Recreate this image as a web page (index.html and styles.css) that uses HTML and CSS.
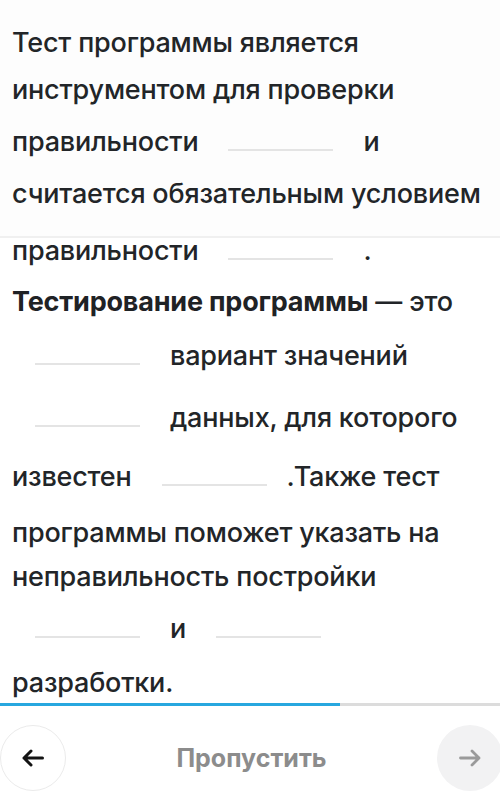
FILE: index.html
```html
<!DOCTYPE html>
<html lang="ru">

<head>
  <meta charset="UTF-8">
  <title>Тест программы</title>
  <link rel="stylesheet" href="styles.css">
</head>

<body>
  <div class="task">
    <div class="task-top">
      <div class="line first">Тест программы является</div>
      <div class="line h47">инструментом для проверки</div>
      <div class="line h52">правильности<span class="blank"></span>и</div>
      <div class="line h52">считается обязательным условием</div>
    </div>
    <div class="line seam">правильности<span class="blank"></span>.</div>
    <div class="line h52"><b>Тестирование программы</b> — это</div>
    <div class="line h54"><span class="blank lead"></span>вариант значений</div>
    <div class="line h62"><span class="blank lead"></span>данных, для которого</div>
    <div class="line h59">известен<span class="blank dot"></span>.Также тест</div>
    <div class="line h56">программы поможет указать на</div>
    <div class="line h44">неправильность постройки</div>
    <div class="line h52"><span class="blank lead"></span>и<span class="blank"></span></div>
    <div class="line h54">разработки.</div>
  </div>

  <!-- прогресс -->
  <div class="progress">
    <div class="progress-fill"></div>
  </div>

  <div class="footer">
    <a class="round-btn back" href="javascript:;">
      <svg width="24" height="18" viewBox="0 0 24 18">
        <path d="M21.5 9H3M10 2L3 9L10 16" fill="none" stroke="#141414" stroke-width="3" stroke-linecap="round" stroke-linejoin="round" />
      </svg>
    </a>
    <a class="skip" href="javascript:;">Пропустить</a>
    <a class="round-btn next" href="javascript:;">
      <svg width="24" height="18" viewBox="0 0 24 18">
        <path d="M2.5 9H21M14 2L21 9L14 16" fill="none" stroke="#9a9a9a" stroke-width="2.8" stroke-linecap="round" stroke-linejoin="round" />
      </svg>
    </a>
  </div>
</body>

</html>
```

FILE: styles.css
```css
* {
  padding: 0;
  margin: 0;
  box-sizing: border-box;
}

body {
  width: 500px;
  height: 801px;
  overflow: hidden;
  background: #ffffff;
  font-family: Inter, "Noto Sans", sans-serif;
  color: #222528;
}

.task-top {
  background: #fdfdfd;
  padding-bottom: 28px;
  border-bottom: 2px solid #f0f0f0;
}

.line {
  padding-left: 12px;
  font-size: 27px;
  font-weight: 500;
  letter-spacing: -0.2px;
  line-height: 28px;
  white-space: nowrap;
}

.line b {
  font-weight: 700;
  color: #1f2225;
}

/* высота строк подобрана по скриншоту */
.first {
  padding-top: 29px;
}

.h44 {
  padding-top: 16px;
}

.h47 {
  padding-top: 19px;
}

.h52 {
  padding-top: 24px;
}

.h54 {
  padding-top: 26px;
}

.h56 {
  padding-top: 28px;
}

.h59 {
  padding-top: 31px;
}

.h62 {
  padding-top: 34px;
}

.seam {
  line-height: 26px;
}

.blank {
  display: inline-block;
  width: 105px;
  height: 0;
  margin: 0 30px;
  border-bottom: 2px solid #e4e4e4;
  vertical-align: baseline;
}

.blank.lead {
  margin-left: 23px;
}

.blank.dot {
  margin-right: 20px;
}

.progress {
  margin-top: 6px;
  height: 3px;
  background: #dcdcdc;
}

.progress-fill {
  width: 340px;
  height: 100%;
  background: #27a7df;
}

.footer {
  display: flex;
  align-items: center;
  justify-content: space-between;
  padding-top: 19px;
  margin-right: -3px;
}

.round-btn {
  display: flex;
  align-items: center;
  justify-content: center;
  width: 66px;
  height: 66px;
  border-radius: 50%;
}

.back {
  border: 1px solid #ebebeb;
  background: #ffffff;
}

.next {
  background: #f2f2f3;
}

.skip {
  font-size: 25px;
  font-weight: 700;
  color: #8c8c8c;
  text-decoration: none;
}
```
